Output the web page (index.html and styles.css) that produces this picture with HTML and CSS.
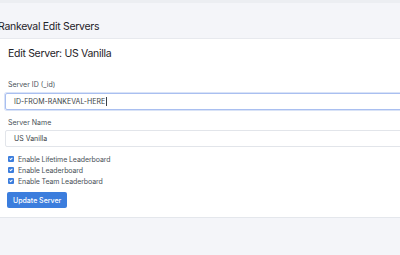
FILE: index.html
```html
<!DOCTYPE html>
<html lang="en">
<head>
    <meta charset="UTF-8">
    <meta name="viewport" content="width=device-width, initial-scale=1.0">
    <title>Rankeval Edit Servers</title>
    <link rel="stylesheet" href="styles.css">
</head>
<body>
    <div class="topbar">
        <h1 class="page-title">Rankeval Edit Servers</h1>
    </div>

    <div class="card">
        <h2 class="card-title">Edit Server: US Vanilla</h2>
        <form class="server-form">
            <label class="field-label">Server ID (_id)</label>
            <div class="field-input focused">
                <span class="value">ID-FROM-RANKEVAL-HERE</span><span class="caret"></span>
            </div>

            <label class="field-label">Server Name</label>
            <div class="field-input">
                <span class="value">US Vanilla</span>
            </div>

            <div class="checks">
                <label class="check"><span class="box"></span>Enable Lifetime Leaderboard</label>
                <label class="check"><span class="box"></span>Enable Leaderboard</label>
                <label class="check"><span class="box"></span>Enable Team Leaderboard</label>
            </div>

            <button type="button" class="btn-primary">Update Server</button>
        </form>
    </div>
</body>
</html>
```

FILE: styles.css
```css
* {
    margin: 0;
    padding: 0;
    box-sizing: border-box;
}
body {
    font-family: Inter, "Noto Sans", sans-serif;
    background: #f4f5f9;
    color: #2b2f36;
    overflow: hidden;
    height: 255px;
    border-top: 3px solid #eceef2;
}
.topbar {
    height: 35px;
    padding: 17px 0 0 0;
}
.page-title {
    font-size: 10.5px;
    letter-spacing: -0.3px;
    font-weight: 400;
    margin-left: -2px;
    color: #1f2329;
}
.card {
    background: #fff;
    border-top: 1px solid #e7e9ee;
    border-bottom: 1px solid #e4e7ec;
    padding: 8px 0 9px 5px;
    width: 420px;
}
.card-title {
    font-size: 10.5px;
    letter-spacing: -0.3px;
    font-weight: 400;
    margin: 0 0 20px 3px;
    color: #1f2329;
}
.server-form {
    display: flex;
    flex-direction: column;
}
.field-label {
    font-size: 7px;
    color: #495057;
    margin: 0 0 4px 3px;
}
.field-input {
    display: flex;
    align-items: center;
    width: 440px;
    height: 17px;
    border: 1px solid #e2e5ea;
    border-radius: 2px;
    padding: 0 8px;
    margin-bottom: 8px;
}
.field-input + .field-label {
    margin-bottom: 3px;
}
.value {
    font-size: 7px;
    color: #3a3f46;
    white-space: nowrap;
}
.field-input.focused {
    border-color: #a9bff0;
    box-shadow: 0 0 0 1px #d9e3f7;
}
.caret {
    width: 1px;
    height: 9px;
    margin-left: 1px;
    background: #3a3f46;
}
.checks {
    display: flex;
    flex-direction: column;
    gap: 3px;
    margin: 0 0 7px 3px;
}
.check {
    display: flex;
    align-items: center;
    gap: 4px;
    font-size: 7px;
    letter-spacing: -0.1px;
    color: #495057;
    height: 8px;
}
.box {
    width: 6px;
    height: 6px;
    border-radius: 1px;
    background: #3b7ddd;
    position: relative;
}
.box::after {
    content: '';
    position: absolute;
    left: 2px;
    top: 1px;
    width: 1px;
    height: 2px;
    border: solid #fff;
    border-width: 0 1px 1px 0;
    transform: rotate(45deg);
}
.btn-primary {
    align-self: flex-start;
    margin-left: 2px;
    background: #3b7ddd;
    color: #fff;
    border: none;
    border-radius: 2px;
    font-family: inherit;
    font-size: 7px;
    font-weight: 500;
    height: 16px;
    padding: 0 6px;
}
```
